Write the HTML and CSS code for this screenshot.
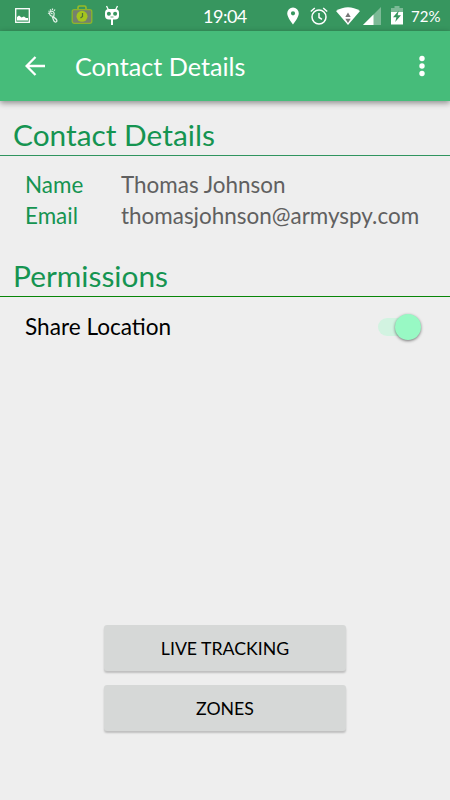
FILE: index.html
```html
<!DOCTYPE html>
<html lang="en">
<head>
<meta charset="utf-8">
<title>Contact Details</title>
<link rel="stylesheet" href="styles.css">
</head>
<body>
<div class="status">
  <div class="notifications">
    <svg width="15" height="15" viewBox="0 0 15 15"><rect x=".7" y=".7" width="13.6" height="13.6" fill="none" stroke="#fff" stroke-width="1.3"/><path d="M2 12.500V9l2-1.500 2.500 2L9 8.500l2 1.500h2v2.500z" fill="#fff"/></svg>
    <svg class="foot" width="12" height="16" viewBox="0 0 12 16" fill="none" stroke="#e2f2e8" stroke-width="1.200"><path d="M3 4C5 2 8 4 7 7L6.500 9C8 10 10 11 10 13 9 15 7 14 6.500 12L5 8C3 8 2 6 3 4z"/><path d="M1 5.500l1-.5M1.500 3l1 .5M3 1.500l1 1M5.500.5v1.500M8 1.500L7 3M4 5l1.500 1"/></svg>
    <svg class="case" width="22" height="20" viewBox="0 0 22 20"><path d="M7 5V2.500Q7 1 8.500 1h5Q15 1 15 2.500V5" fill="none" stroke="#9abb25" stroke-width="1.600"/><rect x="1.200" y="4.700" width="19.600" height="13.600" rx="2" fill="#75816f" stroke="#8eb42b" stroke-width="1.300"/><circle cx="11" cy="11.300" r="5.500" fill="#a5c51e"/><path d="M11.500 8v3.500L9.500 13" fill="none" stroke="#4c7138" stroke-width="1.200"/></svg>
    <svg class="cid" width="16" height="21" viewBox="0 0 16 21"><path d="M2.500 1l2 4M13.500 1l-2 4" stroke="#fff" stroke-width="1.300"/><rect x="1" y="4" width="14" height="10.500" rx="4" fill="#fff"/><circle cx="4.900" cy="8.700" r="2" fill="#37965f"/><circle cx="11.100" cy="8.700" r="2" fill="#37965f"/><path d="M6.500 12h3" stroke="#37965f" stroke-width=".8"/><path d="M8 14v6" stroke="#fff" stroke-width="2"/></svg>
  </div>
  <span class="clock">19:04</span>
  <div class="system">
    <svg width="12" height="18" viewBox="0 0 12 18"><path fill="#fff" fill-rule="evenodd" d="M6 .5A5.800 5.800 0 0 0 .2 6.300C.2 10.500 6 17.500 6 17.500S11.800 10.500 11.800 6.300A5.800 5.800 0 0 0 6 .5zM6 4.200a2.100 2.100 0 1 1 0 4.200 2.100 2.100 0 0 1 0-4.200z"/></svg>
    <svg class="alarm" width="18" height="18" viewBox="0 0 18 18" fill="none" stroke="#fff" stroke-width="1.500"><circle cx="9" cy="10" r="7"/><path d="M9 6v4.500l3 1.800M.8 4.500L4.800 1M17.200 4.500L13.200 1"/></svg>
    <svg class="wifi" width="24" height="18" viewBox="0 0 24 18"><path d="M0 4Q12-3.500 24 4L12 18z" fill="#fff"/><path d="M12 5.500l2.700 4.500H9.300zM12 16l2.700-4.200H9.300z" fill="#777"/></svg>
    <svg class="signal" width="18" height="18" viewBox="0 0 18 18"><path d="M18 0v18H0z" fill="#7cba96"/><path d="M10.500 7.500V18H0z" fill="#fff"/></svg>
    <svg class="battery" width="12" height="19" viewBox="0 0 12 19"><path d="M3.500 0h5v2H12v4.500H0V2h3.500z" fill="#7cba96"/><path d="M0 6h12v12.500H0z" fill="#fff"/><path d="M7.800 4.500L2 11.200h3.400L4.200 16 10 9.300H6.600z" fill="#37965f"/></svg>
    <span class="percent">72%</span>
  </div>
</div>
<header class="appbar">
  <svg class="back" width="20" height="20" viewBox="0 0 20 20" fill="none" stroke="#fff" stroke-width="2.300"><path d="M10.500 1L1.600 10l8.900 9M1.600 10H20"/></svg>
  <h1>Contact Details</h1>
  <svg class="more" width="6" height="22" viewBox="0 0 6 22" fill="#fff"><circle cx="3" cy="3.500" r="2.700"/><circle cx="3" cy="11" r="2.700"/><circle cx="3" cy="18.500" r="2.700"/></svg>
</header>
<main>
  <h2 class="details-title"><span>Contact Details</span></h2>
  <dl>
    <dt class="name-label">Name</dt><dd class="name">Thomas Johnson</dd>
    <dt class="email-label">Email</dt><dd class="email">thomasjohnson@armyspy.com</dd>
  </dl>
  <h2 class="permissions-title"><span>Permissions</span></h2>
  <div class="permission"><span>Share Location</span><div class="switch"><div class="thumb"></div></div></div>
  <div class="actions"><button class="live">LIVE TRACKING</button><button class="zones">ZONES</button></div>
</main>
</body>
</html>
```
FILE: styles.css
```css
* { box-sizing: border-box; }
body { margin: 0; width: 450px; height: 800px; display: flex; flex-direction: column; background: #eee; font-family: Lato, sans-serif; overflow: hidden; }
svg { display: block; flex: none; }
.status { height: 31px; flex: none; background: #37965f; color: #fff; display: grid; grid-template-columns: 203px 1fr 163px; }
.notifications { display: flex; align-items: flex-start; padding: 8px 0 0 15px; }
.foot { margin-left: 17px; }
.case { margin: -3px 0 0 12px; }
.cid { margin: -3px 0 0 11px; }
.clock { font-size: 18px; letter-spacing: -.5px; line-height: 32px; }
.system { display: flex; align-items: flex-start; padding-top: 7px; }
.alarm { margin-left: 11px; }
.wifi { margin-left: 8px; }
.signal { margin-left: 3px; }
.battery { margin: -1px 0 0 10px; }
.percent { margin: -7px 0 0 8px; font-size: 15px; line-height: 33px; }
.appbar { height: 70px; flex: none; display: flex; align-items: center; padding: 0 25px; background: #46bc7a; color: #fff; box-shadow: 0 2px 6px rgba(0,0,0,.42); position: relative; }
h1 { margin: 0 0 1px 30px; font-size: 25.200px; line-height: 36px; font-weight: 400; white-space: nowrap; }
.more { margin-left: auto; }
main { flex: 1; display: flex; flex-direction: column; }
h2 { margin: 0; padding-left: 13px; font-size: 29.850px; line-height: 36px; font-weight: 400; color: #159451; white-space: nowrap; }
.details-title { height: 55px; padding-top: 16px; border-bottom: 1px solid #2f945e; }
dl { margin: 0; height: 102px; padding: 13px 0 0 25px; display: grid; grid-template-columns: 96px 1fr; grid-auto-rows: 31px; align-content: start; font-size: 22.450px; line-height: 31px; white-space: nowrap; }
dt { color: #159451; }
dd { margin: 0; color: #606060; }
.permissions-title { height: 39px; border-bottom: 1px solid #078507; }
.permission { height: 59px; padding: 0 29px 0 25px; display: flex; align-items: center; justify-content: space-between; font-size: 22.600px; color: #000; }
.switch { width: 43px; height: 18px; border-radius: 9px; background: #d2f3e1; display: flex; align-items: center; justify-content: flex-end; }
.thumb { width: 26px; height: 26px; flex: none; border-radius: 50%; background: #98f9c4; box-shadow: 0 1px 3px rgba(0,0,0,.5); }
.actions { margin: auto auto 69px; display: flex; flex-direction: column; gap: 14px; }
button { width: 242px; height: 46px; padding: 0; border: 0; border-radius: 3px; background: #d6d8d7; color: #000; box-shadow: 0 2px 2px rgba(0,0,0,.2); font: 400 17.700px Lato, sans-serif; }
```
